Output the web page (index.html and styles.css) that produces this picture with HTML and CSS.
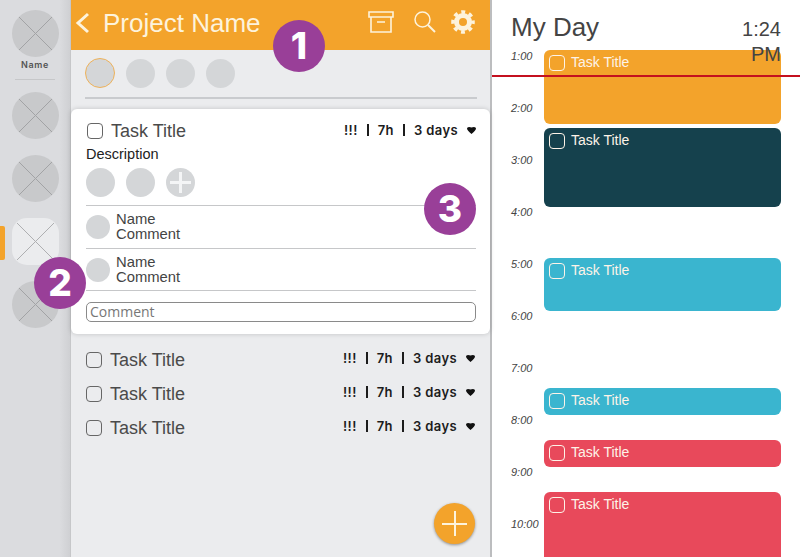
FILE: index.html
```html
<!DOCTYPE html>
<html lang="en">
<head>
    <meta charset="UTF-8">
    <title>Project Name</title>
    <link rel="stylesheet" href="styles.css">
</head>
<body>
    <div class="app">
        <!-- project rail -->
        <nav class="rail">
            <div class="rail-item">
                <svg class="thumb" viewBox="0 0 47 47"><circle cx="23.5" cy="23.5" r="23.5" fill="#c8c9cb"/><path d="M7 7 L40 40 M40 7 L7 40" stroke="#a2a3a5" stroke-width="1"/></svg>
                <span class="rail-name">Name</span>
                <span class="rail-line"></span>
            </div>
            <svg class="thumb" viewBox="0 0 47 47"><circle cx="23.5" cy="23.5" r="23.5" fill="#c8c9cb"/><path d="M7 7 L40 40 M40 7 L7 40" stroke="#a2a3a5" stroke-width="1"/></svg>
            <svg class="thumb" viewBox="0 0 47 47"><circle cx="23.5" cy="23.5" r="23.5" fill="#c8c9cb"/><path d="M7 7 L40 40 M40 7 L7 40" stroke="#a2a3a5" stroke-width="1"/></svg>
            <div class="rail-active">
                <svg class="thumb" viewBox="0 0 47 47"><rect width="47" height="47" rx="15" fill="#ebecee"/><path d="M5 5 L42 42 M42 5 L5 42" stroke="#aeafb1" stroke-width="1"/></svg>
            </div>
            <svg class="thumb" viewBox="0 0 47 47"><circle cx="23.5" cy="23.5" r="23.5" fill="#c8c9cb"/><path d="M7 7 L40 40 M40 7 L7 40" stroke="#a2a3a5" stroke-width="1"/></svg>
        </nav>

        <main class="project">
            <header class="topbar">
                <svg class="back" viewBox="0 0 15 22"><path d="M13 2 L3 11 L13 20" fill="none" stroke="#fdf3dc" stroke-width="3"/></svg>
                <h1>Project Name</h1>
                <div class="topbar-icons">
                    <svg class="icon-archive" viewBox="0 0 26 22"><path d="M1 1 H25 V6 H1 Z M3 6 V21 H23 V6 M9 11 H17" fill="none" stroke="#fdf3dc" stroke-width="1.6"/></svg>
                    <svg class="icon-search" viewBox="0 0 22 22"><circle cx="8.5" cy="8.5" r="7.5" fill="none" stroke="#fdf3dc" stroke-width="1.5"/><path d="M14 14 L21 21" stroke="#fdf3dc" stroke-width="2"/></svg>
                    <svg class="icon-gear" viewBox="0 0 24 24"><circle cx="12" cy="12" r="6.5" fill="none" stroke="#fdf3dc" stroke-width="5"/><circle cx="12" cy="12" r="10" fill="none" stroke="#fdf3dc" stroke-width="3.6" stroke-dasharray="3.9 3.95" stroke-dashoffset="2"/></svg>
                </div>
            </header>

            <div class="people">
                <span class="dot dot-on"></span>
                <span class="dot"></span>
                <span class="dot"></span>
                <span class="dot"></span>
            </div>

            <section class="card">
                <div class="task task-open">
                    <span class="check"></span>
                    <span class="task-title">Task Title</span>
                    <div class="meta"><span>!!!</span><i></i><span>7h</span><i></i><span>3 days</span><svg class="caret" viewBox="0 0 9 7"><path d="M0 1.6 Q0 0 2 0 Q3.6 0 4.5 0.5 Q5.4 0 7 0 Q9 0 9 1.6 Q9 3.4 4.5 7 Q0 3.4 0 1.6 Z" fill="#111"/></svg></div>
                </div>
                <p class="desc">Description</p>
                <div class="assignees">
                    <span class="dot"></span>
                    <span class="dot"></span>
                    <span class="dot dot-add"></span>
                </div>
                <div class="comment">
                    <span class="dot dot-small"></span>
                    <p>Name<br>Comment</p>
                </div>
                <div class="comment">
                    <span class="dot dot-small"></span>
                    <p>Name<br>Comment</p>
                </div>
                <div class="comment-input">Comment</div>
            </section>

            <div class="task-list">
                <div class="task">
                    <span class="check"></span>
                    <span class="task-title">Task Title</span>
                    <div class="meta"><span>!!!</span><i></i><span>7h</span><i></i><span>3 days</span><svg class="caret" viewBox="0 0 9 7"><path d="M0 1.6 Q0 0 2 0 Q3.6 0 4.5 0.5 Q5.4 0 7 0 Q9 0 9 1.6 Q9 3.4 4.5 7 Q0 3.4 0 1.6 Z" fill="#111"/></svg></div>
                </div>
                <div class="task">
                    <span class="check"></span>
                    <span class="task-title">Task Title</span>
                    <div class="meta"><span>!!!</span><i></i><span>7h</span><i></i><span>3 days</span><svg class="caret" viewBox="0 0 9 7"><path d="M0 1.6 Q0 0 2 0 Q3.6 0 4.5 0.5 Q5.4 0 7 0 Q9 0 9 1.6 Q9 3.4 4.5 7 Q0 3.4 0 1.6 Z" fill="#111"/></svg></div>
                </div>
                <div class="task">
                    <span class="check"></span>
                    <span class="task-title">Task Title</span>
                    <div class="meta"><span>!!!</span><i></i><span>7h</span><i></i><span>3 days</span><svg class="caret" viewBox="0 0 9 7"><path d="M0 1.6 Q0 0 2 0 Q3.6 0 4.5 0.5 Q5.4 0 7 0 Q9 0 9 1.6 Q9 3.4 4.5 7 Q0 3.4 0 1.6 Z" fill="#111"/></svg></div>
                </div>
            </div>

            <div class="fab"></div>
        </main>

        <aside class="day">
            <header class="day-head">
                <h2>My Day</h2>
                <span class="clock">1:24 PM</span>
            </header>
            <div class="timeline">
                <span class="hour">1:00</span>
                <span class="hour">2:00</span>
                <span class="hour">3:00</span>
                <span class="hour">4:00</span>
                <span class="hour">5:00</span>
                <span class="hour">6:00</span>
                <span class="hour">7:00</span>
                <span class="hour">8:00</span>
                <span class="hour">9:00</span>
                <span class="hour">10:00</span>

                <div class="event orange slot-1"><span class="check"></span>Task Title</div>
                <div class="event teal slot-2"><span class="check"></span>Task Title</div>
                <div class="event blue slot-3"><span class="check"></span>Task Title</div>
                <div class="event blue slot-4"><span class="check"></span>Task Title</div>
                <div class="event red slot-5"><span class="check"></span>Task Title</div>
                <div class="event red slot-6"><span class="check"></span>Task Title</div>
            </div>
            <div class="now-line"></div>
        </aside>

        <span class="callout callout-1">1</span>
        <span class="callout callout-2">2</span>
        <span class="callout callout-3">3</span>
    </div>
</body>
</html>
```

FILE: styles.css
```css
* {
    box-sizing: border-box;
    margin: 0;
    padding: 0;
}

body {
    font-family: "Liberation Sans", Arial, sans-serif;
    color: #444;
    overflow: hidden;
}

.app {
    position: relative;
    display: flex;
    width: 800px;
    height: 557px;
    overflow: hidden;
    background: white;
}

/* rail */
.rail {
    position: relative;
    flex: 0 0 71px;
    display: flex;
    flex-direction: column;
    align-items: center;
    gap: 16px;
    padding-top: 10px;
    background: linear-gradient(to right, #dbdcdf 85%, #cfd0d3);
    border-right: 1px solid #c6c7c9;
}

.thumb {
    display: block;
    width: 47px;
    height: 47px;
    flex: none;
}

.rail-item {
    display: flex;
    flex-direction: column;
    align-items: center;
    margin-bottom: -4px;
}

.rail-name {
    font-family: Inter, sans-serif;
    font-size: 9px;
    font-weight: 600;
    line-height: 14px;
    letter-spacing: 0.07em;
    margin-top: 1px;
    color: #555;
}

.rail-line {
    width: 40px;
    height: 1px;
    margin-top: 7px;
    background: #c6c7c9;
}

.rail-active::before {
    content: "";
    position: absolute;
    left: 0;
    width: 5px;
    height: 34px;
    margin-top: 8px;
    background: #f3a32b;
    border-radius: 0 2px 2px 0;
}

/* middle column */
.project {
    position: relative;
    flex: 0 0 421px;
    background: #ebecee;
    border-right: 2px solid #bcbdbf;
}

.topbar {
    display: flex;
    align-items: center;
    height: 50px;
    padding: 0 16px 5px 4px;
    background: #f3a32b;
    color: #fdf3dc;
}

.back {
    width: 15px;
    height: 22px;
    margin-right: 13px;
}

.topbar h1 {
    font-size: 26px;
    font-weight: 400;
    line-height: 1;
}

.topbar-icons {
    display: flex;
    align-items: center;
    margin-left: auto;
    margin-top: -2px;
}

.icon-archive {
    width: 26px;
    height: 22px;
}

.icon-search {
    width: 22px;
    height: 22px;
    margin-left: 20px;
}

.icon-gear {
    width: 24px;
    height: 24px;
    margin-left: 15px;
    margin-right: -1px;
}

.people {
    display: flex;
    align-items: center;
    gap: 11px;
    height: 49px;
    margin: 0 13px 0 14px;
    padding-bottom: 1px;
    border-bottom: 2px solid #c9cbce;
}

.dot {
    display: block;
    width: 29px;
    height: 29px;
    flex: none;
    border-radius: 50%;
    background: #d4d6d8;
}

.dot-on {
    width: 30px;
    height: 30px;
    border: 1px solid #eeb25a;
}

.dot-small {
    width: 24px;
    height: 24px;
}

.dot-add {
    position: relative;
}

.dot-add::before,
.dot-add::after {
    content: "";
    position: absolute;
    background: #f4f5f6;
}

.dot-add::before {
    left: 4px;
    right: 4px;
    top: 13px;
    height: 3px;
}

.dot-add::after {
    top: 4px;
    bottom: 4px;
    left: 13px;
    width: 3px;
}

/* expanded card */
.card {
    margin-top: 10px;
    padding: 10px 14px 0 15px;
    height: 225px;
    background: white;
    border-radius: 6px;
    box-shadow: 0 0 5px rgba(0, 0, 0, 0.18);
}

.task {
    display: flex;
    align-items: center;
    height: 34px;
}

.task-open {
    height: 24px;
    padding-left: 1px;
}

.check {
    display: block;
    width: 16px;
    height: 16px;
    flex: none;
    border: 1px solid #666;
    border-radius: 4px;
}

.task-title {
    margin-left: 8px;
    font-size: 18px;
    color: #4a4a4a;
}

.meta {
    display: flex;
    align-items: center;
    margin-left: auto;
    margin-top: -4px;
    font-family: Inter, sans-serif;
    font-size: 13px;
    font-weight: 600;
    letter-spacing: 0.03em;
    color: #1c1c1c;
}

.task-open .meta {
    margin-top: -2px;
}

.meta i {
    width: 2px;
    height: 12px;
    margin: 0 9px;
    background: #1c1c1c;
}

.caret {
    width: 9px;
    height: 7px;
    margin-left: 9px;
    margin-top: 1px;
}

.desc {
    margin-top: 3px;
    font-size: 14.5px;
    line-height: 17px;
    color: #222;
}

.assignees {
    display: flex;
    gap: 11px;
    height: 43px;
    padding-top: 5px;
    border-bottom: 1px solid #c6c7c9;
}

.comment {
    display: flex;
    align-items: center;
    gap: 6px;
    height: 43px;
    border-bottom: 1px solid #c6c7c9;
}

.comment p {
    font-size: 14.8px;
    line-height: 15px;
    color: #444;
}

.comment + .comment {
    height: 42px;
}

.comment-input {
    height: 20px;
    margin-top: 11px;
    padding-left: 3px;
    border: 1px solid #8a8a8a;
    border-radius: 5px;
    font-family: "Open Sans", sans-serif;
    font-size: 14px;
    line-height: 18px;
    color: #777;
}

.task-list {
    padding: 9px 15px 0 15px;
}

/* add button */
.fab {
    position: absolute;
    right: 15px;
    bottom: 13px;
    width: 41px;
    height: 41px;
    border-radius: 50%;
    background: #f3a32b;
    box-shadow: 0 1px 3px rgba(0, 0, 0, 0.4);
}

.fab::before,
.fab::after {
    content: "";
    position: absolute;
    background: #fdf3dc;
}

.fab::before {
    left: 8px;
    right: 8px;
    top: 20px;
    height: 2px;
}

.fab::after {
    top: 8px;
    bottom: 8px;
    left: 20px;
    width: 2px;
}

/* day column */
.day {
    position: relative;
    flex: 1;
    padding: 0 19px;
}

.day-head {
    display: flex;
    justify-content: space-between;
    height: 50px;
    padding-top: 12px;
}

.day-head h2 {
    font-size: 26px;
    font-weight: 400;
    line-height: 30px;
    color: #444;
}

.clock {
    position: relative;
    z-index: 1;
    width: 50px;
    margin-top: 5px;
    font-size: 20px;
    line-height: 25px;
    text-align: right;
    color: #444;
}

.timeline {
    display: grid;
    grid-template-columns: 33px 1fr;
    grid-auto-rows: 26px;
}

.hour {
    grid-column: 1;
    grid-row: span 2;
    margin-top: -1px;
    font-size: 11px;
    font-style: italic;
    line-height: 14px;
    color: #444;
}

.event {
    grid-column: 2;
    display: flex;
    align-items: flex-start;
    gap: 6px;
    padding: 4px 0 0 5px;
    border-radius: 6px;
    font-size: 14px;
    line-height: 16px;
    color: #fdf3e8;
}

.event .check {
    border-color: currentColor;
    margin-top: 1px;
}

.orange { background: #f3a32b; }
.teal { background: #15414d; }
.blue { background: #3ab5cf; }
.red { background: #e8495b; }

.slot-1 { grid-row: 1 / span 3; margin-bottom: 4px; }
.slot-2 { grid-row: 4 / span 3; margin-bottom: -1px; }
.slot-3 { grid-row: 9 / span 2; margin-bottom: -1px; }
.slot-4 { grid-row: 14 / span 1; margin-bottom: -1px; }
.slot-5 { grid-row: 16 / span 1; margin-bottom: -1px; }
.slot-6 { grid-row: 18 / span 4; }

.now-line {
    position: absolute;
    left: 0;
    right: 0;
    top: 75px;
    height: 2px;
    background: #c4101f;
}

/* numbered callouts */
.callout {
    position: absolute;
    width: 52px;
    height: 52px;
    border-radius: 50%;
    background: #993f98;
    font-family: Inter, sans-serif;
    font-size: 37px;
    font-weight: 800;
    line-height: 52px;
    text-align: center;
    color: white;
}

.callout-1 { left: 273px; top: 20px; }
.callout-2 { left: 34px; top: 257px; }
.callout-3 { left: 424px; top: 183px; }
```
